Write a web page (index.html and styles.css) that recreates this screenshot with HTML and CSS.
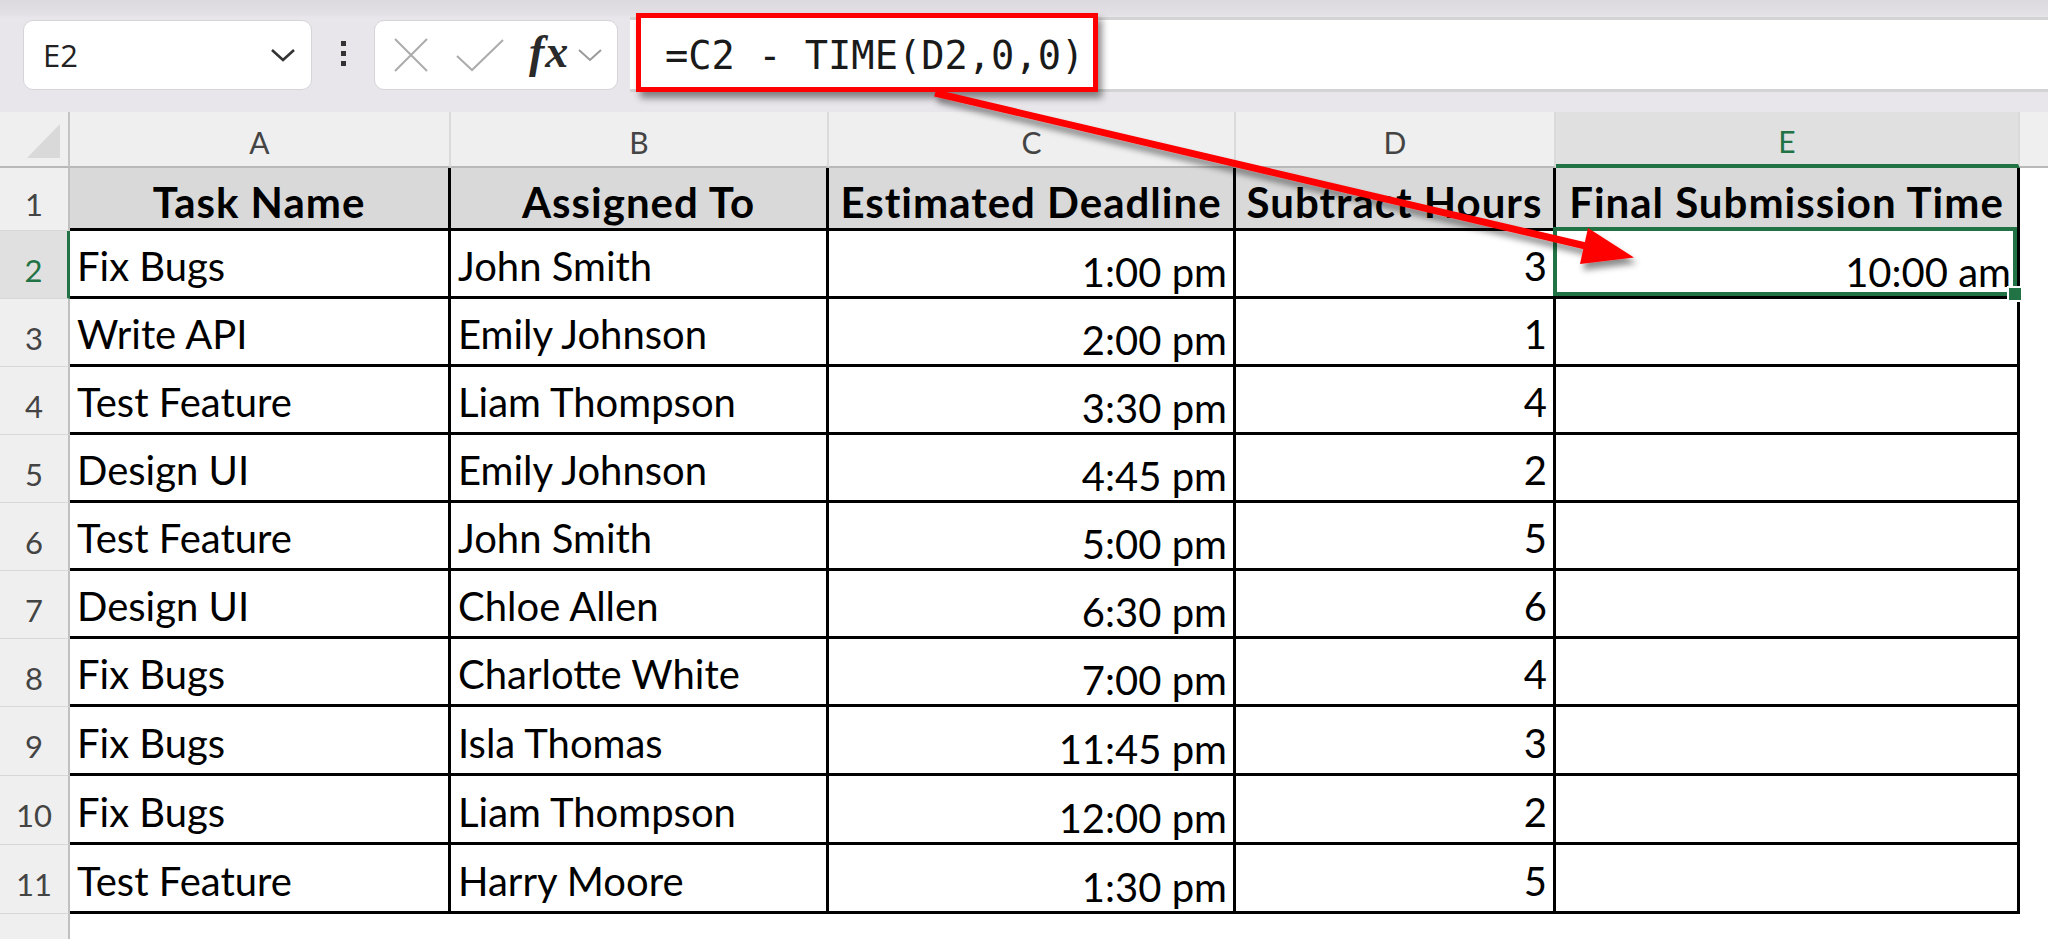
FILE: index.html
```html
<!DOCTYPE html>
<html lang="en">
<head>
<meta charset="utf-8">
<title>Excel - TIME subtraction</title>
<link rel="stylesheet" href="styles.css">
</head>
<body>
<div class="app">
  <header class="toolbar">
    <div class="namebox">
      <span class="ref">E2</span>
      <svg class="chev" width="28" height="16" viewBox="0 0 28 16"><polyline points="3,3 14,13 25,3" fill="none" stroke="#333" stroke-width="2.6"/></svg>
    </div>
    <div class="dots"><i></i><i></i><i></i></div>
    <div class="fxbox">
      <svg class="ic-x" width="36" height="36" viewBox="0 0 36 36"><path d="M2 2 L34 34 M34 2 L2 34" stroke="#acacac" stroke-width="2" fill="none"/></svg>
      <svg class="ic-ok" width="50" height="34" viewBox="0 0 50 34"><polyline points="2,18 17,32 48,2" fill="none" stroke="#acacac" stroke-width="2"/></svg>
      <span class="fx">fx</span>
      <svg class="ic-dd" width="26" height="16" viewBox="0 0 26 16"><polyline points="2,3 13,13 24,3" fill="none" stroke="#9a9a9a" stroke-width="2"/></svg>
    </div>
    <div class="fbar"><span class="formula">=C2 - TIME(D2,0,0)</span></div>
  </header>

  <main class="sheet">
    <div class="corner"><svg width="33" height="34" viewBox="0 0 33 34"><polygon points="33,0 33,34 0,34" fill="#d9d9d9"/></svg></div>
    <div class="colh">A</div>
    <div class="colh">B</div>
    <div class="colh">C</div>
    <div class="colh">D</div>
    <div class="colh sel">E</div>
    <div class="colh last"></div>

    <div class="rowh">1</div>
    <div class="c h">Task Name</div>
    <div class="c h">Assigned To</div>
    <div class="c h">Estimated Deadline</div>
    <div class="c h">Subtract Hours</div>
    <div class="c h">Final Submission Time</div>
    <div class="blank"></div>

    <div class="rowh sel">2</div>
    <div class="c">Fix Bugs</div>
    <div class="c">John Smith</div>
    <div class="c r t">1:00 pm</div>
    <div class="c r">3</div>
    <div class="c r t active">10:00 am</div>
    <div class="blank"></div>

    <div class="rowh">3</div>
    <div class="c">Write API</div>
    <div class="c">Emily Johnson</div>
    <div class="c r t">2:00 pm</div>
    <div class="c r">1</div>
    <div class="c"></div>
    <div class="blank"></div>

    <div class="rowh">4</div>
    <div class="c">Test Feature</div>
    <div class="c">Liam Thompson</div>
    <div class="c r t">3:30 pm</div>
    <div class="c r">4</div>
    <div class="c"></div>
    <div class="blank"></div>

    <div class="rowh">5</div>
    <div class="c">Design UI</div>
    <div class="c">Emily Johnson</div>
    <div class="c r t">4:45 pm</div>
    <div class="c r">2</div>
    <div class="c"></div>
    <div class="blank"></div>

    <div class="rowh">6</div>
    <div class="c">Test Feature</div>
    <div class="c">John Smith</div>
    <div class="c r t">5:00 pm</div>
    <div class="c r">5</div>
    <div class="c"></div>
    <div class="blank"></div>

    <div class="rowh">7</div>
    <div class="c">Design UI</div>
    <div class="c">Chloe Allen</div>
    <div class="c r t">6:30 pm</div>
    <div class="c r">6</div>
    <div class="c"></div>
    <div class="blank"></div>

    <div class="rowh">8</div>
    <div class="c">Fix Bugs</div>
    <div class="c">Charlotte White</div>
    <div class="c r t">7:00 pm</div>
    <div class="c r">4</div>
    <div class="c"></div>
    <div class="blank"></div>

    <div class="rowh">9</div>
    <div class="c">Fix Bugs</div>
    <div class="c">Isla Thomas</div>
    <div class="c r t">11:45 pm</div>
    <div class="c r">3</div>
    <div class="c"></div>
    <div class="blank"></div>

    <div class="rowh">10</div>
    <div class="c">Fix Bugs</div>
    <div class="c">Liam Thompson</div>
    <div class="c r t">12:00 pm</div>
    <div class="c r">2</div>
    <div class="c"></div>
    <div class="blank"></div>

    <div class="rowh">11</div>
    <div class="c">Test Feature</div>
    <div class="c">Harry Moore</div>
    <div class="c r t">1:30 pm</div>
    <div class="c r">5</div>
    <div class="c"></div>
    <div class="blank"></div>

    <div class="rowh">12</div>
    <div class="blank"></div>
    <div class="blank"></div>
    <div class="blank"></div>
    <div class="blank"></div>
    <div class="blank"></div>
    <div class="blank"></div>
  </main>

  <svg class="arrow" width="2048" height="939" viewBox="0 0 2048 939">
    <defs>
      <filter id="sh" x="-10%" y="-50%" width="120%" height="200%">
        <feDropShadow dx="3" dy="6" stdDeviation="3" flood-color="#000" flood-opacity="0.45"/>
      </filter>
    </defs>
    <g filter="url(#sh)" fill="#ff0000">
      <line x1="935" y1="93" x2="1592" y2="247.5" stroke="#ff0000" stroke-width="7"/>
      <polygon points="1634,257.5 1588,228 1580,264"/>
    </g>
  </svg>
</div>
</body>
</html>
```

FILE: styles.css
```css
* { box-sizing: border-box; margin: 0; padding: 0; }

html, body {
  width: 2048px;
  height: 939px;
  overflow: hidden;
  background: #ffffff;
}

body {
  font-family: Lato, "Liberation Sans", sans-serif;
  color: #000;
}

.app {
  position: relative;
  width: 2048px;
  height: 939px;
  overflow: hidden;
}

/* ---------- formula toolbar ---------- */
.toolbar {
  height: 112px;
  display: flex;
  align-items: flex-start;
  background: linear-gradient(#dbd8de 0, #e3e0e6 15px, #e9e6eb 17px, #e9e6eb 100%);
}

.namebox {
  margin: 20px 0 0 23px;
  width: 289px;
  height: 70px;
  background: #fff;
  border: 1px solid #d6d4d9;
  border-radius: 10px;
  display: flex;
  align-items: center;
  justify-content: space-between;
  padding: 0 14px 0 19px;
  font: 31px "Open Sans", "Liberation Sans", sans-serif;
  color: #222;
}

.dots {
  margin: 41px 0 0 29px;
  display: flex;
  flex-direction: column;
  gap: 5px;
}

.dots i {
  display: block;
  width: 5px;
  height: 5px;
  background: #333;
}

.fxbox {
  margin: 20px 0 0 28px;
  width: 244px;
  height: 70px;
  background: #fff;
  border: 1px solid #d6d4d9;
  border-radius: 10px;
  display: flex;
  align-items: center;
  padding: 0 0 0 18px;
}

.ic-ok { margin-left: 26px; }

.fx {
  margin-left: 24px;
  font: italic 700 46px "Liberation Serif", "DejaVu Serif", serif;
  letter-spacing: 1px;
  color: #2a2a2a;
  line-height: 1;
  padding-bottom: 6px;
}

.ic-dd { margin-left: 8px; }

.fbar {
  flex: 1;
  margin: 17px 0 0 12px;
  height: 75px;
  background: #fff;
  border-top: 3px solid #d3d3d3;
  border-bottom: 3px solid #d3d3d3;
  display: flex;
  align-items: flex-start;
}

.formula {
  margin: -7px 0 0 6px;
  height: 79px;
  width: 462px;
  border: 5px solid #ff0000;
  box-shadow: 4px 6px 7px rgba(0, 0, 0, 0.45);
  display: flex;
  align-items: center;
  padding: 5px 0 0 24px;
  font: 38.7px "DejaVu Sans Mono", "Liberation Mono", monospace;
  color: #1a1a1a;
  white-space: pre;
  background: #fff;
}

/* ---------- sheet grid ---------- */
.sheet {
  display: grid;
  grid-template-columns: 70px 381px 378px 407px 320px 464px 28px;
  grid-template-rows: 56px 63px repeat(7, 68px) repeat(3, 69px) 68px;
}

.corner {
  background: #efefef;
  border-right: 2px solid #c4c4c4;
  border-bottom: 2px solid #b8b8b8;
  display: flex;
  justify-content: flex-end;
  align-items: flex-end;
  padding: 0 8px 8px 0;
}

.colh {
  background: #efefef;
  border-right: 2px solid #dadada;
  border-bottom: 2px solid #b8b8b8;
  display: flex;
  justify-content: center;
  align-items: center;
  padding-top: 5px;
  font-size: 30px;
  color: #444;
}

.colh.sel {
  background: #e0e0e0;
  color: #217346;
  border-bottom: 4px solid #217346;
}

.colh.last { border-right: none; }

.rowh {
  background: #efefef;
  border-right: 2px solid #c0c0c0;
  border-bottom: 1px solid #d8d8d8;
  display: flex;
  justify-content: center;
  align-items: center;
  padding-top: 10px;
  font-size: 31px;
  color: #444;
}

.rowh.sel {
  background: #e0e0e0;
  color: #217346;
  border-right: 3px solid #217346;
}

.c {
  border-right: 3px solid #000;
  border-bottom: 3px solid #000;
  display: flex;
  align-items: center;
  padding: 5px 6px 0 7px;
  white-space: nowrap;
  font-size: 40px;
  color: #000;
}

.c.h {
  background: #d9d9d9;
  font-weight: 700;
  font-size: 42px;
  letter-spacing: 1px;
  justify-content: center;
  padding: 7px 0 0 0;
}

.c.r { justify-content: flex-end; }

.c.t { padding-top: 17px; }

.c.active { position: relative; }

.c.active::after {
  content: "";
  position: absolute;
  left: -3px;
  top: -4px;
  right: 0;
  bottom: 0;
  border: 4px solid #217346;
}

.c.active::before {
  content: "";
  position: absolute;
  right: -6px;
  bottom: -6px;
  width: 12px;
  height: 12px;
  background: #217346;
  border: 2px solid #fff;
  z-index: 1;
}

.blank { background: #fff; }

/* ---------- annotation arrow ---------- */
.arrow {
  position: absolute;
  top: 0;
  left: 0;
  pointer-events: none;
}
```
